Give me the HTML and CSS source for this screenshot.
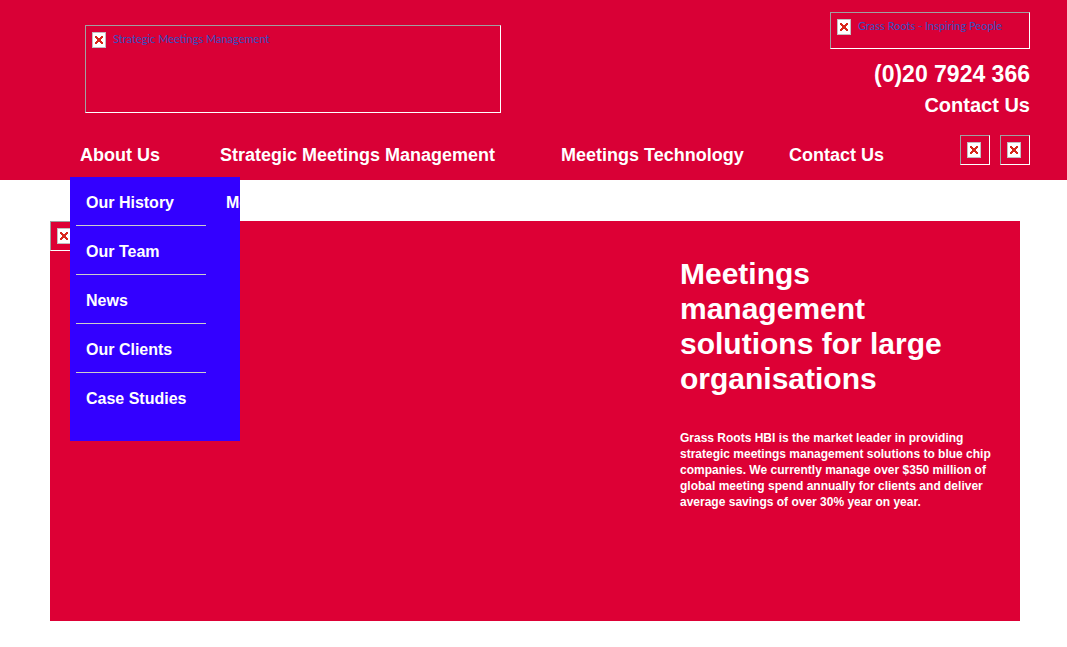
FILE: index.html
```html
<!DOCTYPE html>
<html lang="en">
<head>
<meta charset="utf-8">
<title>Strategic Meetings Management</title>
<link rel="stylesheet" href="styles.css">
</head>
<body>
<svg class="defs" aria-hidden="true">
  <symbol id="missing" viewBox="0 0 14 16">
    <path fill="#c0c0c0" d="M0 0h14v16H0z"/>
    <path fill="#fff" d="M1 1h12v14H1z"/>
    <path fill="#d8281c" d="M3 4h2v1h1v1h2V5h1V4h2v2h-1v1H9v2h1v1h1v2H9v-1H8v-1H6v1H5v1H3v-2h1V9h1V7H4V6H3z"/>
  </symbol>
</svg>
<header class="header">
  <div class="top">
    <a class="frame logo" href="#"><svg class="missing"><use href="#missing"/></svg><span class="alt">Strategic Meetings Management</span></a>
    <div class="contact">
      <a class="frame partner" href="#"><svg class="missing"><use href="#missing"/></svg><span class="alt">Grass Roots - Inspiring People</span></a>
      <p class="phone">(0)20 7924 366</p>
      <a class="contact-link" href="#">Contact Us</a>
    </div>
  </div>
  <div class="bar">
    <nav class="nav">
      <div class="nav-item about">
        <a href="#">About Us</a>
        <div class="menu">
          <ul class="menu-column">
            <li><a href="#">Our History</a></li>
            <li><a href="#">Our Team</a></li>
            <li><a href="#">News</a></li>
            <li><a href="#">Our Clients</a></li>
            <li><a href="#">Case Studies</a></li>
          </ul>
          <ul class="menu-column">
            <li><a href="#">Me</a></li>
          </ul>
        </div>
      </div>
      <div class="nav-item strategic"><a href="#">Strategic Meetings Management</a></div>
      <div class="nav-item technology"><a href="#">Meetings Technology</a></div>
      <div class="nav-item"><a href="#">Contact Us</a></div>
    </nav>
    <div class="social">
      <a class="frame badge" href="#" aria-label="Social link"><svg class="missing"><use href="#missing"/></svg></a>
      <a class="frame badge" href="#" aria-label="Social link"><svg class="missing"><use href="#missing"/></svg></a>
    </div>
  </div>
</header>
<main class="hero">
  <div class="frame badge"><svg class="missing"><use href="#missing"/></svg></div>
  <section class="copy">
    <h1>Meetings management solutions for large organisations</h1>
    <p>Grass Roots HBI is the market leader in providing strategic meetings management solutions to blue chip companies. We currently manage over $350 million of global meeting spend annually for clients and deliver average savings of over 30% year on year.</p>
  </section>
</main>
</body>
</html>
```

FILE: styles.css
```css
* {
  box-sizing: border-box;
}

body {
  margin: 0;
  background: #fff;
  color: #fff;
  font-family: "Liberation Sans", Arial, sans-serif;
  font-weight: bold;
}

a {
  color: inherit;
  text-decoration: none;
}

h1,
p,
ul {
  margin: 0;
  padding: 0;
}

.defs {
  position: absolute;
  width: 0;
  height: 0;
}

.header {
  padding: 12px 37px 15px 80px;
  background: #d90036;
}

.top {
  display: flex;
  justify-content: space-between;
}

.frame {
  display: flex;
  align-items: flex-start;
  gap: 7px;
  padding: 6px;
  border: 1px solid;
  border-color: #a0a0a0 #fff #fff #a0a0a0;
}

.missing {
  flex: none;
  width: 14px;
  height: 16px;
  shape-rendering: crispEdges;
}

.alt {
  color: #3450c0;
  font: 11px/14px Lato, "Liberation Sans", sans-serif;
}

.logo {
  width: 416px;
  height: 88px;
  margin: 13px 5px 0;
}

.contact {
  display: flex;
  flex-direction: column;
  align-items: flex-end;
}

.partner {
  width: 200px;
  height: 37px;
}

.phone {
  margin-top: 10px;
  font-size: 23px;
  line-height: 30px;
}

.contact-link {
  margin-top: 4px;
  font-size: 20px;
  line-height: 24px;
}

.bar {
  display: flex;
  justify-content: space-between;
  margin-top: 18px;
}

.nav {
  display: flex;
  gap: 40px;
  padding-top: 10px;
  font-size: 18px;
  line-height: 20px;
  white-space: nowrap;
}

.about {
  position: relative;
  width: 100px;
}

.strategic {
  width: 301px;
}

.technology {
  width: 188px;
}

.social {
  display: flex;
  gap: 10px;
}

.badge {
  width: 30px;
  height: 30px;
}

.menu {
  position: absolute;
  top: 32px;
  left: -10px;
  z-index: 1;
  display: flex;
  gap: 10px;
  width: 170px;
  padding: 0 6px 20px;
  overflow: hidden;
  background: #30f;
  font-size: 16px;
}

.menu-column {
  flex: none;
  width: 130px;
  list-style: none;
}

.menu-column li {
  padding: 16px 10px 12px;
}

.menu-column li + li {
  border-top: 1px solid #ccc;
}

.hero {
  display: flex;
  justify-content: space-between;
  min-height: 400px;
  margin: 41px 47px 26px 50px;
  padding-right: 20px;
  background: #dd0035;
}

.copy {
  width: 320px;
  padding-top: 35px;
}

.copy h1 {
  max-width: 310px;
  font-size: 30px;
  line-height: 35px;
}

.copy p {
  margin-top: 34px;
  font-size: 12px;
  line-height: 16px;
}
```
